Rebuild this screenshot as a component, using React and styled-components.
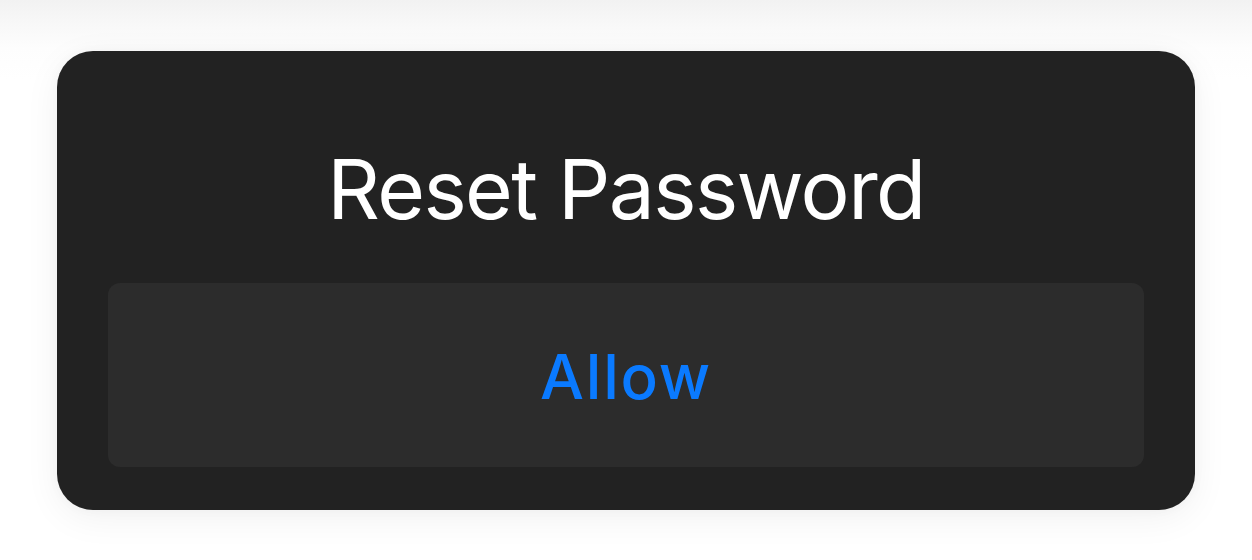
import React from "react";
import styled, { createGlobalStyle } from "styled-components";

const GlobalStyle = createGlobalStyle`
  html, body {
    margin: 0;
    padding: 0;
    background: #ffffff;
    font-family: Inter, "Liberation Sans", sans-serif;
    -webkit-font-smoothing: antialiased;
  }
`;

const Page = styled.div`
  width: 1252px;
  height: 560px;
  box-sizing: border-box;
  padding: 51px 57px 0;
  background: linear-gradient(#f2f2f2 0px, #f8f8f8 24px, #fdfdfd 48px, #ffffff 80px);
  overflow: hidden;
`;

const Sheet = styled.div`
  width: 1138px;
  height: 459px;
  box-sizing: border-box;
  padding: 98px 51px 43px;
  display: flex;
  flex-direction: column;
  align-items: stretch;
  background: #222222;
  border-radius: 36px;
  box-shadow: 0 8px 36px rgba(0, 0, 0, 0.06), 0 0 12px rgba(0, 0, 0, 0.03);
`;

const Title = styled.h2`
  margin: 0 0 52px;
  font-size: 82px;
  line-height: 1;
  font-weight: 400;
  color: #ffffff;
  text-align: center;
  letter-spacing: -1.6px;
`;

const ActionButton = styled.button`
  flex: 1;
  border: 0;
  border-radius: 12px;
  background: #2c2c2c;
  color: ${(p) => p.color || "#0a7aff"};
  font-family: inherit;
  font-size: 62px;
  font-weight: 500;
  line-height: 1;
  letter-spacing: 1.8px;
  padding: 4px 0 0;
  cursor: pointer;
`;

export default function App() {
  return (
    <>
      <GlobalStyle />
      <Page>
        <Sheet>
          <Title>Reset Password</Title>
          <ActionButton>Allow</ActionButton>
        </Sheet>
      </Page>
    </>
  );
}
